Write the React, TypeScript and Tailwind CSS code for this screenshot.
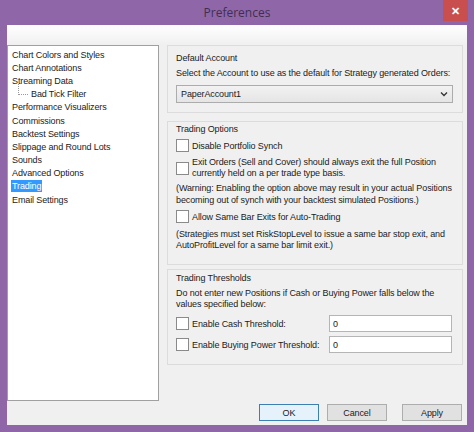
import React from "react";

const font = { fontFamily: '"Liberation Sans", Arial, sans-serif' };

function Check() {
  return <div className="w-[13px] h-[13px] shrink-0 border border-[#8a8a8a] bg-white" />;
}

const treeItems: { label: string; indent?: boolean; selected?: boolean }[] = [
  { label: "Chart Colors and Styles" },
  { label: "Chart Annotations" },
  { label: "Streaming Data" },
  { label: "Bad Tick Filter", indent: true },
  { label: "Performance Visualizers" },
  { label: "Commissions" },
  { label: "Backtest Settings" },
  { label: "Slippage and Round Lots" },
  { label: "Sounds" },
  { label: "Advanced Options" },
  { label: "Trading", selected: true },
  { label: "Email Settings" },
];

export default function App() {
  return (
    <div
      className="w-[474px] h-[432px] bg-[#8f67a8] flex flex-col text-[9px] leading-[12px] tracking-[-0.12px] text-[#1b1b1b] whitespace-nowrap"
      style={font}
    >
      {/* title bar */}
      <div className="relative h-[25px] flex items-center justify-center shrink-0">
        <span className="text-[12px] tracking-normal text-[#3f2f52] mt-[1px]" style={{ fontFamily: '"Open Sans", "Noto Sans", sans-serif' }}>
          Preferences
        </span>
        <div className="absolute right-[6px] top-0 w-[25px] h-[21px] bg-[#c94f4f] flex items-center justify-center text-white text-[11px] font-bold">
          ✕
        </div>
      </div>
      {/* client */}
      <div className="mx-[7px] mb-[7px] flex-1 flex flex-col bg-gradient-to-b from-white to-[#f0f0f0] to-[20px]">
        <div className="flex pt-[20px]">
          {/* tree */}
          <div className="w-[152px] h-[356px] bg-white border border-[#a0a0a0] pt-[2px] shrink-0">
            {treeItems.map((it) => (
              <div key={it.label} className="h-[13.2px] flex items-center relative">
                {it.indent && (
                  <div className="absolute left-[10px] top-[-4px] w-[10px] h-[11px] border-l border-b border-dotted border-[#9a9a9a]" />
                )}
                <span
                  className={
                    (it.indent ? "ml-[22px] " : "ml-[3px] ") +
                    (it.selected ? "bg-[#3399ff] text-white px-[1px]" : "px-[1px]")
                  }
                >
                  {it.label}
                </span>
              </div>
            ))}
          </div>
          {/* right column */}
          <div className="ml-[8px] w-[296px] flex flex-col">
            {/* Default Account */}
            <div className="h-[68px] border border-[#dcdcdc] px-[8px] pt-[6px]">
              <div>Default Account</div>
              <div className="mt-[3px]">Select the Account to use as the default for Strategy generated Orders:</div>
              <div className="mt-[6px] h-[18px] w-[277px] border border-[#acacac] bg-gradient-to-b from-[#f2f2f2] to-[#e5e5e5] flex items-center justify-between px-[4px]">
                <span>PaperAccount1</span>
                <svg width="8" height="6" viewBox="0 0 8 6">
                  <path d="M1 1.5 L4 4.5 L7 1.5" fill="none" stroke="#333" strokeWidth="1.3" />
                </svg>
              </div>
            </div>
            {/* Trading Options */}
            <div className="mt-[8px] h-[144px] border border-[#dcdcdc] px-[8px] pt-[1px]">
              <div>Trading Options</div>
              <div className="mt-[4px] flex items-center gap-[3px]">
                <Check />
                <span>Disable Portfolio Synch</span>
              </div>
              <div className="mt-[5px] flex items-center gap-[3px]">
                <Check />
                <span className="leading-[11px]">
                  Exit Orders (Sell and Cover) should always exit the full Position
                  <br />
                  currently held on a per trade type basis.
                </span>
              </div>
              <div className="mt-[3px] leading-[12px]">
                (Warning: Enabling the option above may result in your actual Positions
                <br />
                becoming out of synch with your backtest simulated Positions.)
              </div>
              <div className="mt-[4px] flex items-center gap-[3px]">
                <Check />
                <span>Allow Same Bar Exits for Auto-Trading</span>
              </div>
              <div className="mt-[6px] leading-[11px]">
                (Strategies must set RiskStopLevel to issue a same bar stop exit, and
                <br />
                AutoProfitLevel for a same bar limit exit.)
              </div>
            </div>
            {/* Trading Thresholds */}
            <div className="mt-[4px] h-[96px] border border-[#dcdcdc] px-[8px] pt-[2px]">
              <div>Trading Thresholds</div>
              <div className="mt-[4px] leading-[11px]">
                Do not enter new Positions if Cash or Buying Power falls below the
                <br />
                values specified below:
              </div>
              <div className="mt-[5px] flex items-center">
                <div className="w-[153px] flex items-center gap-[3px]">
                  <Check />
                  <span>Enable Cash Threshold:</span>
                </div>
                <div className="w-[123px] h-[17px] border border-[#b5b5b5] bg-white px-[3px] flex items-center">0</div>
              </div>
              <div className="mt-[4px] flex items-center">
                <div className="w-[153px] flex items-center gap-[3px]">
                  <Check />
                  <span>Enable Buying Power Threshold:</span>
                </div>
                <div className="w-[123px] h-[17px] border border-[#b5b5b5] bg-white px-[3px] flex items-center">0</div>
              </div>
            </div>
          </div>
        </div>
        {/* buttons */}
        <div className="flex justify-end pr-[5px] mt-[3px]">
          <div className="w-[60px] h-[17px] border border-[#3c7fb1] bg-[#e5f1fb] flex items-center justify-center">OK</div>
          <div className="ml-[8px] w-[60px] h-[17px] border border-[#adadad] bg-[#e1e1e1] flex items-center justify-center">Cancel</div>
          <div className="ml-[15px] w-[60px] h-[17px] border border-[#adadad] bg-[#e1e1e1] flex items-center justify-center">Apply</div>
        </div>
      </div>
    </div>
  );
}
